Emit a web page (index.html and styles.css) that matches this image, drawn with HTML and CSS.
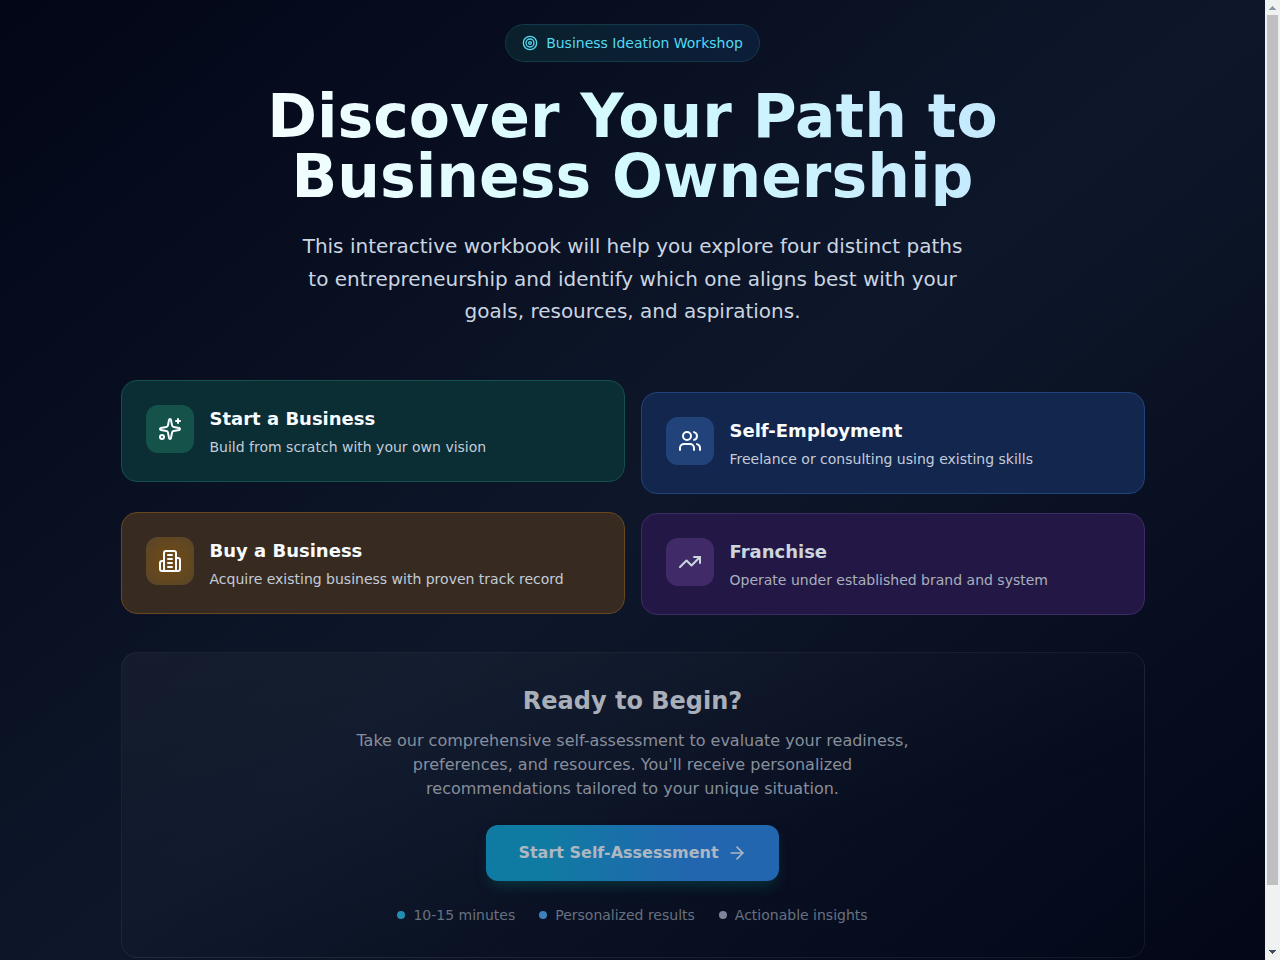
FILE: index.html
```html
<!DOCTYPE html>
<html lang="en">
<head>
  <meta charset="UTF-8">
  <meta name="viewport" content="width=device-width, initial-scale=1.0">
  <title>Business Ideation Workshop</title>
  <link rel="stylesheet" href="styles.css">
</head>
<body>
  <main class="page">
    <div class="container">

      <!-- Intro -->
      <header class="hero">
        <div class="badge">
          <svg class="icon icon-sm" viewBox="0 0 24 24" aria-hidden="true">
            <circle cx="12" cy="12" r="10"/>
            <circle cx="12" cy="12" r="6"/>
            <circle cx="12" cy="12" r="2"/>
          </svg>
          <span>Business Ideation Workshop</span>
        </div>
        <h1>Discover Your Path to Business Ownership</h1>
        <p>This interactive workbook will help you explore four distinct paths to entrepreneurship and identify which one aligns best with your goals, resources, and aspirations.</p>
      </header>

      <!-- Paths -->
      <section class="paths">
        <div class="column column-left">
          <article class="card card-green">
            <div class="card-icon">
              <svg class="icon" viewBox="0 0 24 24" aria-hidden="true">
                <path d="M11.017 2.814a1 1 0 0 1 1.966 0l1.051 5.558a2 2 0 0 0 1.594 1.594l5.558 1.051a1 1 0 0 1 0 1.966l-5.558 1.051a2 2 0 0 0-1.594 1.594l-1.051 5.558a1 1 0 0 1-1.966 0l-1.051-5.558a2 2 0 0 0-1.594-1.594l-5.558-1.051a1 1 0 0 1 0-1.966l5.558-1.051a2 2 0 0 0 1.594-1.594z"/>
                <path d="M20 2v4"/>
                <path d="M22 4h-4"/>
                <circle cx="4" cy="20" r="2"/>
              </svg>
            </div>
            <div>
              <h3>Start a Business</h3>
              <p>Build from scratch with your own vision</p>
            </div>
          </article>
          <article class="card card-amber">
            <div class="card-icon">
              <svg class="icon" viewBox="0 0 24 24" aria-hidden="true">
                <path d="M6 22V4a2 2 0 0 1 2-2h8a2 2 0 0 1 2 2v18Z"/>
                <path d="M6 12H4a2 2 0 0 0-2 2v6a2 2 0 0 0 2 2h2"/>
                <path d="M18 9h2a2 2 0 0 1 2 2v9a2 2 0 0 1-2 2h-2"/>
                <path d="M10 6h4"/>
                <path d="M10 10h4"/>
                <path d="M10 14h4"/>
                <path d="M10 18h4"/>
              </svg>
            </div>
            <div>
              <h3>Buy a Business</h3>
              <p>Acquire existing business with proven track record</p>
            </div>
          </article>
        </div>
        <div class="column column-right">
          <article class="card card-blue">
            <div class="card-icon">
              <svg class="icon" viewBox="0 0 24 24" aria-hidden="true">
                <path d="M16 21v-2a4 4 0 0 0-4-4H6a4 4 0 0 0-4 4v2"/>
                <path d="M16 3.128a4 4 0 0 1 0 7.744"/>
                <path d="M22 21v-2a4 4 0 0 0-3-3.87"/>
                <circle cx="9" cy="7" r="4"/>
              </svg>
            </div>
            <div>
              <h3>Self-Employment</h3>
              <p>Freelance or consulting using existing skills</p>
            </div>
          </article>
          <article class="card card-purple">
            <div class="card-icon">
              <svg class="icon" viewBox="0 0 24 24" aria-hidden="true">
                <path d="M16 7h6v6"/>
                <path d="m22 7-8.500 8.500-5-5L2 17"/>
              </svg>
            </div>
            <div>
              <h3>Franchise</h3>
              <p>Operate under established brand and system</p>
            </div>
          </article>
        </div>
      </section>

      <!-- Call to action -->
      <section class="cta">
        <h2>Ready to Begin?</h2>
        <p>Take our comprehensive self-assessment to evaluate your readiness, preferences, and resources. You'll receive personalized recommendations tailored to your unique situation.</p>
        <button type="button" class="start-btn">
          Start Self-Assessment
          <svg class="icon icon-md" viewBox="0 0 24 24" aria-hidden="true">
            <path d="M5 12h14"/>
            <path d="m12 5 7 7-7 7"/>
          </svg>
        </button>
        <ul class="features">
          <li class="dot-cyan">10-15 minutes</li>
          <li class="dot-blue">Personalized results</li>
          <li class="dot-gray">Actionable insights</li>
        </ul>
      </section>

    </div>
  </main>

  <!-- Scroll track -->
  <div class="scrollbar" aria-hidden="true">
    <svg class="scroll-arrow" viewBox="0 0 15 15"><path d="M7 6h1v1h1v1h1v1h1v1H4V9h1V8h1V7h1z" fill="#8b98a5"/></svg>
    <div class="scroll-track">
      <div class="scroll-thumb"></div>
    </div>
    <svg class="scroll-arrow" viewBox="0 0 15 15"><path d="M4 5h7v1h-1v1H9v1H8v1H7V8H6V7H5V6H4z" fill="#3f4a5a"/></svg>
  </div>
</body>
</html>
```

FILE: styles.css
```css
* {
  box-sizing: border-box;
}

body {
  display: flex;
  height: 100vh;
  margin: 0;
  overflow: hidden;
  font-family: "DejaVu Sans", sans-serif;
  background-color: #020617;
  color: #f8fcff;
}

h1, h2, h3, p, ul {
  margin: 0;
  padding: 0;
}

.page {
  flex: 1;
  min-width: 0;
  overflow-y: auto;
  scrollbar-width: none;
}

.container {
  display: flex;
  flex-direction: column;
  align-items: center;
  padding: 24px 24px 68px;
  background: linear-gradient(to bottom right, #020617, #0e172a, #020617);
}

.icon {
  width: 24px;
  height: 24px;
  flex-shrink: 0;
  fill: none;
  stroke: currentColor;
  stroke-width: 2;
  stroke-linecap: round;
  stroke-linejoin: round;
}

.icon-sm {
  width: 16px;
  height: 16px;
}

.icon-md {
  width: 20px;
  height: 20px;
}

/* Intro */
.hero {
  display: flex;
  flex-direction: column;
  align-items: center;
  gap: 24px;
  width: 100%;
  max-width: 768px;
  margin-bottom: 52px;
  text-align: center;
}

.badge {
  display: flex;
  align-items: center;
  gap: 8px;
  padding: 8px 16px;
  border: 1px solid #12384a;
  border-radius: 20px;
  background: linear-gradient(to right, #0a212c, #0c1d3a);
  color: #53d9f2;
  font-size: 14px;
  line-height: 20px;
}

.hero h1 {
  width: 100%;
  font-size: 60px;
  line-height: 60px;
  background: linear-gradient(to right, #f6feff, #d2fafe, #c4e8fe);
  -webkit-background-clip: text;
  background-clip: text;
  color: transparent;
}

.hero p {
  max-width: 672px;
  color: #cbd5e1;
  font-size: 20px;
  line-height: 1.625;
}

/* Paths */
.paths {
  display: grid;
  grid-template-columns: 1fr 1fr;
  gap: 16px;
  width: 100%;
  max-width: 1024px;
  margin-bottom: 37px;
}

.column {
  display: flex;
  flex-direction: column;
}

.column-left {
  gap: 30px;
}

.column-right {
  gap: 19px;
  padding-top: 12px;
}

.card {
  display: flex;
  gap: 16px;
  padding: 24px;
  border: 1px solid;
  border-radius: 16px;
}

.card-icon {
  display: flex;
  align-items: center;
  justify-content: center;
  width: 48px;
  height: 48px;
  border-radius: 12px;
}

.card h3 {
  margin-bottom: 4px;
  font-size: 18px;
  line-height: 28px;
}

.card p {
  color: #c3ccd9;
  font-size: 14px;
  line-height: 20px;
}

.card-green {
  background-color: #0b2d34;
  border-color: #144f4b;
}

.card-green .card-icon {
  background-color: #14524a;
}

.card-blue {
  background-color: #13264d;
  border-color: #20437b;
}

.card-blue .card-icon {
  background-color: #22437a;
}

.card-amber {
  background-color: #372b21;
  border-color: #68481e;
}

.card-amber .card-icon {
  background: radial-gradient(#6b4918 30%, #57452c);
}

.card-purple {
  background-color: #231845;
  border-color: #3f2a66;
  color: #cbd6dd;
}

.card-purple .card-icon {
  background-color: #402b68;
}

.card-purple p {
  color: #a7b0bd;
}

/* Call to action */
.cta {
  display: flex;
  flex-direction: column;
  align-items: center;
  width: 100%;
  max-width: 1024px;
  padding: 32px;
  border: 1px solid rgba(255, 255, 255, 0.06);
  border-radius: 16px;
  background: linear-gradient(to bottom right, rgba(255, 255, 255, 0.04), rgba(255, 255, 255, 0) 70%);
  text-align: center;
}

.cta h2 {
  margin-bottom: 12px;
  color: #a9afb9;
  font-size: 24px;
  line-height: 32px;
}

.cta p {
  max-width: 576px;
  margin-bottom: 24px;
  color: #878e9b;
  font-size: 16px;
  line-height: 24px;
}

.start-btn {
  display: flex;
  align-items: center;
  gap: 8px;
  height: 56px;
  padding: 0 32px;
  border: none;
  border-radius: 12px;
  background: linear-gradient(to right, #107ba2 20%, #2266b0 70%);
  box-shadow: 0 8px 14px -4px rgba(10, 90, 90, 0.5);
  color: #adb7c1;
  font-family: inherit;
  font-size: 16px;
  font-weight: bold;
  cursor: pointer;
}

.start-btn:hover {
  background: linear-gradient(to right, #0e6f92 20%, #1e5c9f 70%);
}

.features {
  display: flex;
  flex-wrap: wrap;
  justify-content: center;
  gap: 24px;
  margin-top: 24px;
  color: #687180;
  font-size: 14px;
  line-height: 20px;
  list-style: none;
}

.features li {
  display: flex;
  align-items: center;
  gap: 8px;
}

.features li::before {
  content: "";
  width: 8px;
  height: 8px;
  border-radius: 50%;
}

.dot-cyan::before {
  background-color: #228fb0;
}

.dot-blue::before {
  background-color: #3f80b8;
}

.dot-gray::before {
  background-color: #80849a;
}

/* Scroll track */
.scrollbar {
  display: flex;
  flex-direction: column;
  width: 15px;
  background-color: #f0f2f2;
}

.scroll-arrow {
  width: 15px;
  height: 15px;
}

.scroll-track {
  flex: 1;
  padding: 0 2px;
}

.scroll-thumb {
  height: 93.5%;
  background-color: #c0c0c2;
}
```
